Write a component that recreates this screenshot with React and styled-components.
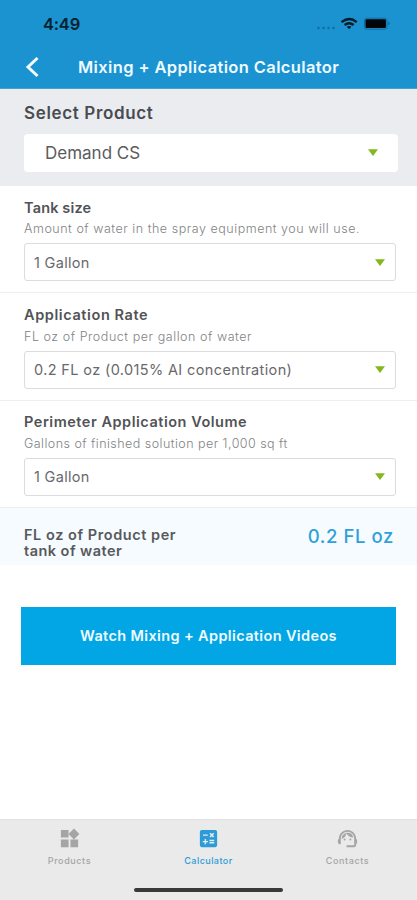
import React from "react";
import styled, { createGlobalStyle } from "styled-components";
import { MdWidgets, MdCalculate, MdSupportAgent } from "react-icons/md";

const GlobalStyle = createGlobalStyle`
	* {
		box-sizing: border-box;
	}
	body {
		margin: 0;
		background-color: #ffffff;
		font-family: Inter, "Liberation Sans", sans-serif;
	}
`;

const Screen = styled.div`
	display: flex;
	flex-direction: column;
	width: 417px;
	height: 900px;
	overflow: hidden;
	background-color: #ffffff;
`;

const Header = styled.header`
	height: 89px;
	background-color: #1b93d1;
	border-bottom: 1px solid #4b9fd0;
`;

const StatusBar = styled.div`
	display: flex;
	align-items: center;
	justify-content: space-between;
	height: 47px;
	padding: 1px 27px 0 43px;
`;

const Clock = styled.span`
	color: #08212f;
	font-size: 16.5px;
	font-weight: 600;
	letter-spacing: -0.2px;
`;

const TitleBar = styled.div`
	display: flex;
	align-items: center;
	height: 40px;
	padding-left: 25px;
`;

const BackButton = styled.button`
	display: flex;
	width: 53px;
	padding: 0;
	border: none;
	background: none;
`;

const Title = styled.h1`
	margin: 0;
	color: #eefaff;
	font-size: 16.5px;
	font-weight: 600;
	line-height: 20px;
	letter-spacing: ${(props) => props.$spacing}px;
	white-space: nowrap;
`;

const ProductSection = styled.section`
	height: 97px;
	padding: 14px 19px 0 24px;
	background-color: #ebecf0;
`;

const ProductLabel = styled.h2`
	margin: 0 0 11px;
	color: #484c51;
	font-size: 17px;
	font-weight: 600;
	line-height: 20px;
	letter-spacing: ${(props) => props.$spacing}px;
`;

const ProductSelect = styled.div`
	display: flex;
	align-items: center;
	justify-content: space-between;
	height: 38px;
	padding: 0 20px 1px 21px;
	border-radius: 4px;
	background-color: #ffffff;
	color: #5b5b5d;
	font-size: 17px;
	letter-spacing: ${(props) => props.$spacing}px;
`;

const Field = styled.section`
	height: 107.33px;
	padding: 13.6px 21px 0 24px;
	border-bottom: 1px solid #eeeff0;
`;

const FieldLabel = styled.h3`
	margin: 0;
	color: #515356;
	font-size: 14.5px;
	font-weight: 600;
	line-height: 16px;
	letter-spacing: ${(props) => props.$spacing}px;
`;

const FieldHint = styled.p`
	margin: 5.9px 0 5.8px;
	color: #818385;
	font-size: 12.5px;
	font-weight: 300;
	line-height: 16px;
	letter-spacing: ${(props) => props.$spacing}px;
	white-space: nowrap;
`;

const FieldSelect = styled.div`
	display: flex;
	align-items: center;
	justify-content: space-between;
	height: 38px;
	padding: 0 10px 0 9px;
	border: 1px solid #dadcde;
	border-radius: 3px;
	color: #68696c;
	font-size: 14.5px;
	letter-spacing: ${(props) => props.$spacing}px;
`;

const Result = styled.section`
	display: flex;
	justify-content: space-between;
	height: 57px;
	padding: 19px 23px 0 24px;
	background-color: #f5fbff;
`;

const ResultLabel = styled.div`
	display: flex;
	flex-direction: column;
	color: #58595b;
	font-size: 14.5px;
	font-weight: 600;
	line-height: 16px;
`;

const ResultLine = styled.span`
	letter-spacing: ${(props) => props.$spacing}px;
`;

const ResultValue = styled.span`
	color: #30a0da;
	font-size: 18.5px;
	font-weight: 500;
	line-height: 19px;
	letter-spacing: ${(props) => props.$spacing}px;
`;

const VideoButton = styled.button`
	height: 58px;
	margin: 42px 21px 0;
	padding: 0 0 1px;
	border: none;
	background-color: #03a6e5;
	color: #effbff;
	font-family: inherit;
	font-size: 14.5px;
	font-weight: 600;
	letter-spacing: ${(props) => props.$spacing}px;
`;

const TabBar = styled.nav`
	display: flex;
	flex-direction: column;
	align-items: center;
	height: 81px;
	margin-top: auto;
	border-top: 1px solid #e2e2e2;
	background-color: #eaeaea;
`;

const Tabs = styled.div`
	display: grid;
	grid-template-columns: repeat(3, 1fr);
	width: 100%;
	height: 67px;
`;

const Tab = styled.div`
	display: flex;
	flex-direction: column;
	align-items: center;
	gap: 5px;
	padding-top: 7px;
	color: ${(props) => (props.$active ? "#2b9cd8" : "#a5a5a5")};
	font-size: 9px;
	font-weight: 500;
	line-height: 12px;
	letter-spacing: ${(props) => props.$spacing}px;
`;

const HomeIndicator = styled.div`
	width: 149px;
	height: 4px;
	border-radius: 2px;
	background-color: #3a3838;
	margin-top: 1px;
`;

const fields = [
	{
		label: "Tank size",
		labelSpacing: 0.15,
		hint: "Amount of water in the spray equipment you will use.",
		hintSpacing: 0.53,
		value: "1 Gallon",
		valueSpacing: 0.3,
	},
	{
		label: "Application Rate",
		labelSpacing: 0.6,
		hint: "FL oz of Product per gallon of water",
		hintSpacing: 0.55,
		value: "0.2 FL oz (0.015% AI concentration)",
		valueSpacing: 0.37,
	},
	{
		label: "Perimeter Application Volume",
		labelSpacing: 0.53,
		hint: "Gallons of finished solution per 1,000 sq ft",
		hintSpacing: 0.46,
		value: "1 Gallon",
		valueSpacing: 0.3,
	},
];

const tabs = [
	{ label: "Products", icon: MdWidgets, spacing: 0.6 },
	{ label: "Calculator", icon: MdCalculate, spacing: 0.45, active: true },
	{ label: "Contacts", icon: MdSupportAgent, spacing: 0.6 },
];

const Arrow = () => (
	<svg width="10" height="7" viewBox="0 0 10 7">
		<path d="M0 0.3h10L5 6.9z" fill="#82b81c" />
	</svg>
);

const StatusIcons = () => (
	<svg width="74" height="16" viewBox="0 0 74 16">
		<g fill="#126b9b">
			<circle cx="2.5" cy="12" r="1.2" />
			<circle cx="7.5" cy="12" r="1.2" />
			<circle cx="12.5" cy="12" r="1.2" />
			<circle cx="17.5" cy="12" r="1.2" />
		</g>
		<g fill="none" stroke="#061b27" strokeWidth="2.3">
			<path d="M25.5 6.1q8 -6.2 15.2 0" />
			<path d="M28.6 9q4.5 -3.6 9 0" />
		</g>
		<path d="M30.8 10.8q2.3 -1.7 4.6 0L33.1 13.3z" fill="#061b27" />
		<rect x="48.4" y="2.2" width="22.6" height="11" rx="2.4" fill="none" stroke="#126b9b" />
		<rect x="49.5" y="3.3" width="20.4" height="8.8" rx="1" fill="#020609" />
		<path d="M72.2 5.5q1.5 0.6 1.5 2t-1.5 2z" fill="#126b9b" />
	</svg>
);

const App = () => {
	return (
		<Screen>
			<GlobalStyle />
			<Header>
				<StatusBar>
					<Clock>4:49</Clock>
					<StatusIcons />
				</StatusBar>
				<TitleBar>
					<BackButton aria-label="Back">
						<svg width="15" height="22" viewBox="0 0 15 22">
							<path d="M12.5 2L3 11l9.500 9" fill="none" stroke="#f4fcff" strokeWidth="3" />
						</svg>
					</BackButton>
					<Title $spacing={0.37}>Mixing + Application Calculator</Title>
				</TitleBar>
			</Header>
			<ProductSection>
				<ProductLabel $spacing={0.65}>Select Product</ProductLabel>
				<ProductSelect $spacing={0}>
					Demand CS
					<Arrow />
				</ProductSelect>
			</ProductSection>
			{fields.map((field) => (
				<Field key={field.label}>
					<FieldLabel $spacing={field.labelSpacing}>{field.label}</FieldLabel>
					<FieldHint $spacing={field.hintSpacing}>{field.hint}</FieldHint>
					<FieldSelect $spacing={field.valueSpacing}>
						{field.value}
						<Arrow />
					</FieldSelect>
				</Field>
			))}
			<Result>
				<ResultLabel>
					<ResultLine $spacing={0.55}>FL oz of Product per</ResultLine>
					<ResultLine $spacing={0.46}>tank of water</ResultLine>
				</ResultLabel>
				<ResultValue $spacing={0.6}>0.2 FL oz</ResultValue>
			</Result>
			<VideoButton $spacing={0.37}>Watch Mixing + Application Videos</VideoButton>
			<TabBar>
				<Tabs>
					{tabs.map((tab) => (
						<Tab key={tab.label} $active={tab.active} $spacing={tab.spacing}>
							<tab.icon size={23} />
							{tab.label}
						</Tab>
					))}
				</Tabs>
				<HomeIndicator />
			</TabBar>
		</Screen>
	);
};

export default App;
